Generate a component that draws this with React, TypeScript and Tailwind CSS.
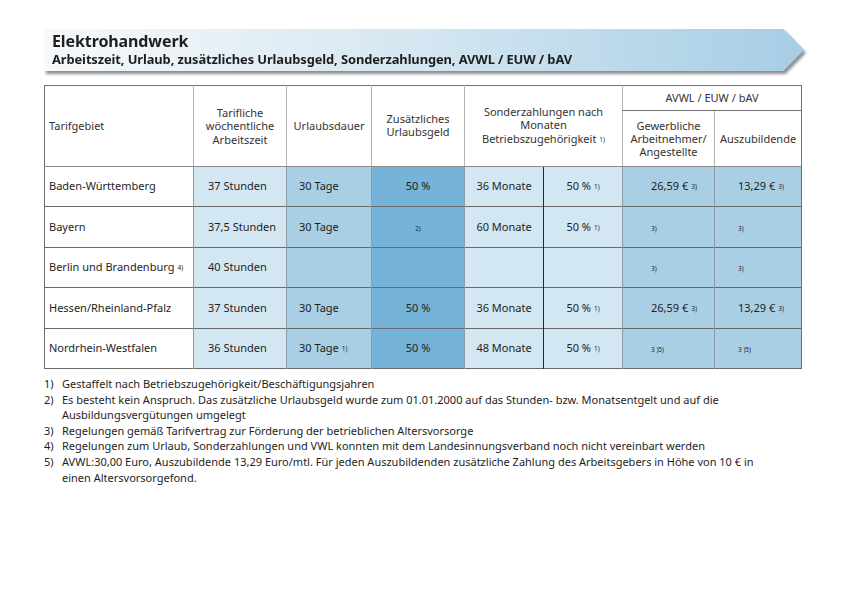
import type { ReactNode } from 'react';

const font = { fontFamily: '"Noto Sans", "Open Sans", sans-serif' };

function Sup({ children }: { children: ReactNode }) {
  return <sup className="text-[6.5px] relative -top-[1px] ml-[3px]">{children}</sup>;
}

type Row = {
  region: ReactNode;
  hours: string;
  vacation: ReactNode;
  extra: ReactNode;
  months: string;
  pct: ReactNode;
  worker: ReactNode;
  trainee: ReactNode;
};

const note = (t: string) => <span className="text-[6.5px]">{t}</span>;

const rows: Row[] = [
  {
    region: 'Baden-Württemberg',
    hours: '37 Stunden',
    vacation: '30 Tage',
    extra: '50 %',
    months: '36 Monate',
    pct: <>50 %<Sup>1)</Sup></>,
    worker: <>26,59 €<Sup>3)</Sup></>,
    trainee: <>13,29 €<Sup>3)</Sup></>,
  },
  {
    region: 'Bayern',
    hours: '37,5 Stunden',
    vacation: '30 Tage',
    extra: note('2)'),
    months: '60 Monate',
    pct: <>50 %<Sup>1)</Sup></>,
    worker: note('3)'),
    trainee: note('3)'),
  },
  {
    region: <>Berlin und Brandenburg<Sup>4)</Sup></>,
    hours: '40 Stunden',
    vacation: '',
    extra: '',
    months: '',
    pct: '',
    worker: note('3)'),
    trainee: note('3)'),
  },
  {
    region: 'Hessen/Rheinland-Pfalz',
    hours: '37 Stunden',
    vacation: '30 Tage',
    extra: '50 %',
    months: '36 Monate',
    pct: <>50 %<Sup>1)</Sup></>,
    worker: <>26,59 €<Sup>3)</Sup></>,
    trainee: <>13,29 €<Sup>3)</Sup></>,
  },
  {
    region: 'Nordrhein-Westfalen',
    hours: '36 Stunden',
    vacation: <>30 Tage<Sup>1)</Sup></>,
    extra: '50 %',
    months: '48 Monate',
    pct: <>50 %<Sup>1)</Sup></>,
    worker: note('3 )5)'),
    trainee: note('3 )5)'),
  },
];

const notes: { n: string; text: ReactNode }[] = [
  { n: '1)', text: 'Gestaffelt nach Betriebszugehörigkeit/Beschäftigungsjahren' },
  {
    n: '2)',
    text: 'Es besteht kein Anspruch. Das zusätzliche Urlaubsgeld wurde zum 01.01.2000 auf das Stunden- bzw. Monatsentgelt und auf die Ausbildungsvergütungen umgelegt',
  },
  { n: '3)', text: 'Regelungen gemäß Tarifvertrag zur Förderung der betrieblichen Altersvorsorge' },
  { n: '4)', text: 'Regelungen zum Urlaub, Sonderzahlungen und VWL konnten mit dem Landesinnungsverband noch nicht vereinbart werden' },
  {
    n: '5)',
    text: 'AVWL:30,00 Euro, Auszubildende 13,29 Euro/mtl. Für jeden Auszubildenden zusätzliche Zahlung des Arbeitsgebers in Höhe von 10 € in einen Altersvorsorgefond.',
  },
];

export default function App() {
  return (
    <div className="w-[848px] h-[600px] bg-white text-[#1e1e1e]" style={font}>
      <div className="ml-[44px] w-[760px] pt-[29px]">
        {/* Banner */}
        <div className="drop-shadow-[2px_3px_1.5px_rgba(0,0,0,0.45)]">
          <div className="h-[42px] pl-[8px] flex flex-col justify-center bg-gradient-to-r from-[#f7f9fb] via-[#d4e6f1] to-[#a6cde5] [clip-path:polygon(0_0,97.3%_0,100%_50%,97.3%_100%,0_100%)]">
            <div className="text-[16px] font-bold leading-[19px] tracking-[-0.1px]">Elektrohandwerk</div>
            <div className="text-[12.9px] font-bold leading-[17px] tracking-[-0.1px]">
              Arbeitszeit, Urlaub, zusätzliches Urlaubsgeld, Sonderzahlungen, AVWL / EUW / bAV
            </div>
          </div>
        </div>

        {/* Table */}
        <table className="mt-[14px] w-[757px] table-fixed border-collapse border border-[#6f6f6f] text-[11px]">
          <colgroup>
            <col className="w-[149px]" />
            <col className="w-[93px]" />
            <col className="w-[85px]" />
            <col className="w-[93px]" />
            <col className="w-[79px]" />
            <col className="w-[79px]" />
            <col className="w-[92px]" />
            <col className="w-[87px]" />
          </colgroup>
          <thead className="leading-[13.3px] text-[#333]">
            <tr className="h-[25px]">
              <th rowSpan={2} className="font-normal text-left pl-[4px] border-b border-[#8a8a8a]">Tarifgebiet</th>
              <th rowSpan={2} className="font-normal border-l border-b border-[#b5b5b5] border-b-[#8a8a8a]">
                Tarifliche<br />wöchentliche<br />Arbeitszeit
              </th>
              <th rowSpan={2} className="font-normal border-l border-b border-[#b5b5b5] border-b-[#8a8a8a]">Urlaubsdauer</th>
              <th rowSpan={2} className="font-normal border-l border-b border-[#b5b5b5] border-b-[#8a8a8a] pb-[2px]">
                Zusätzliches<br />Urlaubsgeld
              </th>
              <th rowSpan={2} colSpan={2} className="font-normal border-l border-b border-[#b5b5b5] border-b-[#8a8a8a] pb-[2px]">
                Sonderzahlungen nach<br />Monaten<br />Betriebszugehörigkeit<Sup>1)</Sup>
              </th>
              <th colSpan={2} className="font-normal border-l border-b border-[#b5b5b5] border-b-[#6f6f6f]">AVWL / EUW / bAV</th>
            </tr>
            <tr className="h-[56px]">
              <th className="font-normal border-l border-b border-[#b5b5b5] border-b-[#8a8a8a]">
                Gewerbliche<br />Arbeitnehmer/<br />Angestellte
              </th>
              <th className="font-normal border-l border-b border-[#b5b5b5] border-b-[#8a8a8a]">Auszubildende</th>
            </tr>
          </thead>
          <tbody>
            {rows.map((r, i) => (
              <tr key={i} className="h-[40.4px] border-b border-[#6a6a6a]">
                <td className="pl-[4px] bg-white">{r.region}</td>
                <td className="pl-[14px] bg-[#d3e7f3] border-l border-[#8e9ba5]">{r.hours}</td>
                <td className="pl-[12px] bg-[#a9cfe5] border-l border-[#8e9ba5]">{r.vacation}</td>
                <td className="text-center bg-[#76b3d8] border-l border-[#8e9ba5]">{r.extra}</td>
                <td className="text-center bg-[#d3e7f3] border-l border-[#8e9ba5]">{r.months}</td>
                <td className="text-center bg-[#d3e7f3] border-l border-[#1d2a36]">{r.pct}</td>
                <td className="pl-[28px] bg-[#a9cfe5] border-l border-[#8e9ba5]">{r.worker}</td>
                <td className="pl-[23px] bg-[#a9cfe5] border-l border-[#8e9ba5]">{r.trainee}</td>
              </tr>
            ))}
          </tbody>
        </table>

        {/* Footnotes */}
        <div className="mt-[7px] w-[740px] text-[11px] leading-[15.6px]">
          {notes.map((n) => (
            <div key={n.n} className="flex">
              <span className="w-[18px] shrink-0">{n.n}</span>
              <span>{n.text}</span>
            </div>
          ))}
        </div>
      </div>
    </div>
  );
}
